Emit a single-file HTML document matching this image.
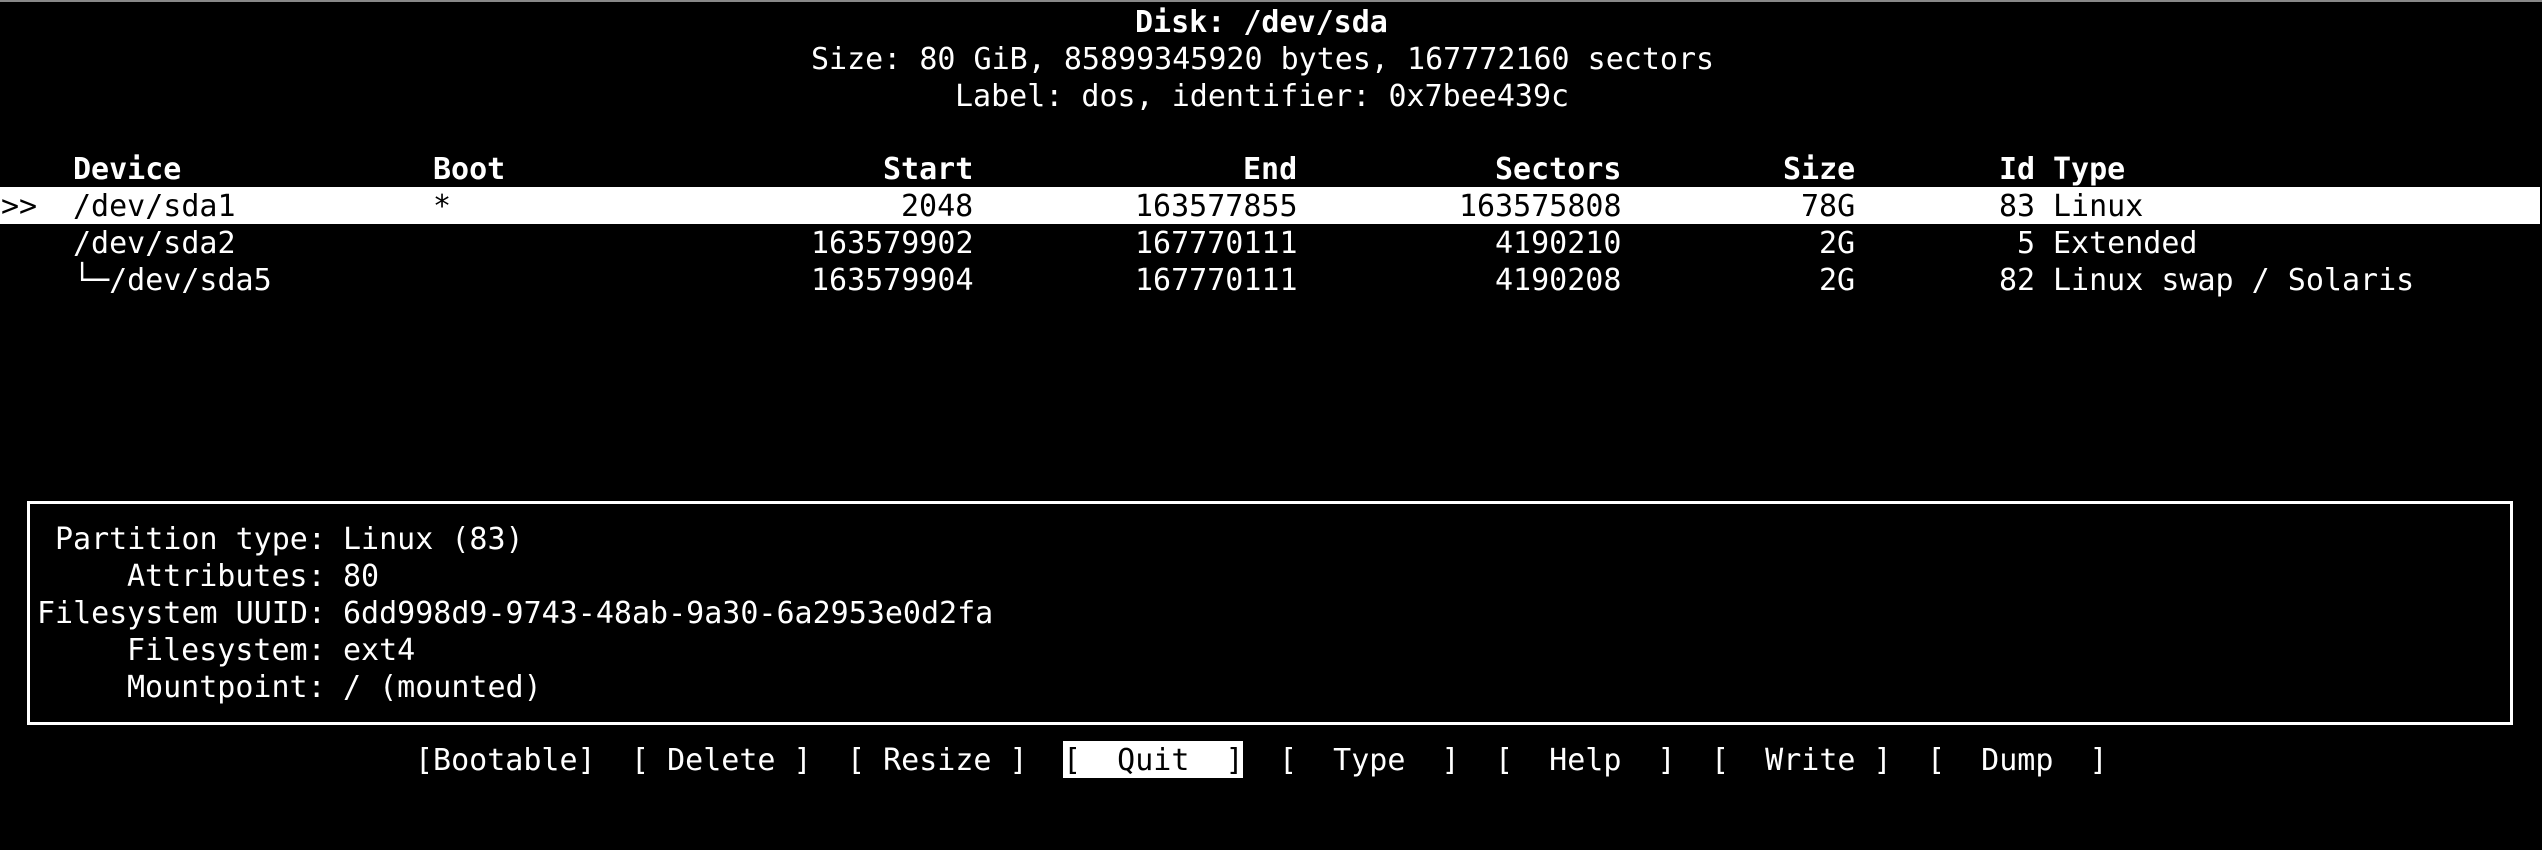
<!DOCTYPE html>
<html><head><meta charset="utf-8"><style>
html,body{margin:0;padding:0;background:#000;width:2542px;height:850px;overflow:hidden;position:relative}
.w{position:absolute;left:1px;top:1px;width:2542px;height:850px}
.t{position:absolute;font-family:"DejaVu Sans Mono","Liberation Mono",monospace;font-size:30px;line-height:37px;height:37px;color:#fff;white-space:pre}
.b{font-weight:bold}
.k{color:#000}
</style></head><body>
<div style="position:absolute;left:0;top:0;width:2542px;height:2px;background:#888"></div>
<div style="position:absolute;left:0;top:187px;width:2540px;height:37px;background:#fff"></div>
<div style="position:absolute;left:27px;top:501px;width:2486px;height:224px;border:3px solid #fff;box-sizing:border-box"></div>
<div style="position:absolute;left:1063px;top:741px;width:180px;height:37px;background:#fff"></div>
<div class="w">
<div class="t b" style="left:1134px;top:3px">Disk: /dev/sda</div>
<div class="t" style="left:810px;top:40px">Size: 80 GiB, 85899345920 bytes, 167772160 sectors</div>
<div class="t" style="left:954px;top:77px">Label: dos, identifier: 0x7bee439c</div>
<div class="t b" style="left:72px;top:150px">Device</div>
<div class="t b" style="left:432px;top:150px">Boot</div>
<div class="t b" style="left:882px;top:150px">Start</div>
<div class="t b" style="left:1242px;top:150px">End</div>
<div class="t b" style="left:1494px;top:150px">Sectors</div>
<div class="t b" style="left:1782px;top:150px">Size</div>
<div class="t b" style="left:1998px;top:150px">Id</div>
<div class="t b" style="left:2052px;top:150px">Type</div>
<div class="t k" style="left:0;top:187px">&gt;&gt;</div>
<div class="t k" style="left:72px;top:187px">/dev/sda1</div>
<div class="t k" style="left:432px;top:187px">*</div>
<div class="t k" style="left:900px;top:187px">2048</div>
<div class="t k" style="left:1134px;top:187px">163577855</div>
<div class="t k" style="left:1458px;top:187px">163575808</div>
<div class="t k" style="left:1800px;top:187px">78G</div>
<div class="t k" style="left:1998px;top:187px">83</div>
<div class="t k" style="left:2052px;top:187px">Linux</div>
<div class="t" style="left:72px;top:224px">/dev/sda2</div>
<div class="t" style="left:810px;top:224px">163579902</div>
<div class="t" style="left:1134px;top:224px">167770111</div>
<div class="t" style="left:1494px;top:224px">4190210</div>
<div class="t" style="left:1818px;top:224px">2G</div>
<div class="t" style="left:2016px;top:224px">5</div>
<div class="t" style="left:2052px;top:224px">Extended</div>
<div class="t" style="left:72px;top:261px">└─/dev/sda5</div>
<div class="t" style="left:810px;top:261px">163579904</div>
<div class="t" style="left:1134px;top:261px">167770111</div>
<div class="t" style="left:1494px;top:261px">4190208</div>
<div class="t" style="left:1818px;top:261px">2G</div>
<div class="t" style="left:1998px;top:261px">82</div>
<div class="t" style="left:2052px;top:261px">Linux swap / Solaris</div>
<div class="t" style="left:54px;top:520px">Partition type:</div>
<div class="t" style="left:342px;top:520px">Linux (83)</div>
<div class="t" style="left:126px;top:557px">Attributes:</div>
<div class="t" style="left:342px;top:557px">80</div>
<div class="t" style="left:36px;top:594px">Filesystem UUID:</div>
<div class="t" style="left:342px;top:594px">6dd998d9-9743-48ab-9a30-6a2953e0d2fa</div>
<div class="t" style="left:126px;top:631px">Filesystem:</div>
<div class="t" style="left:342px;top:631px">ext4</div>
<div class="t" style="left:126px;top:668px">Mountpoint:</div>
<div class="t" style="left:342px;top:668px">/ (mounted)</div>
<div class="t" style="left:414px;top:741px">[Bootable]</div>
<div class="t" style="left:630px;top:741px">[ Delete ]</div>
<div class="t" style="left:846px;top:741px">[ Resize ]</div>
<div class="t k" style="left:1062px;top:741px">[  Quit  ]</div>
<div class="t" style="left:1278px;top:741px">[  Type  ]</div>
<div class="t" style="left:1494px;top:741px">[  Help  ]</div>
<div class="t" style="left:1710px;top:741px">[  Write ]</div>
<div class="t" style="left:1926px;top:741px">[  Dump  ]</div>
</div>
</body></html>
